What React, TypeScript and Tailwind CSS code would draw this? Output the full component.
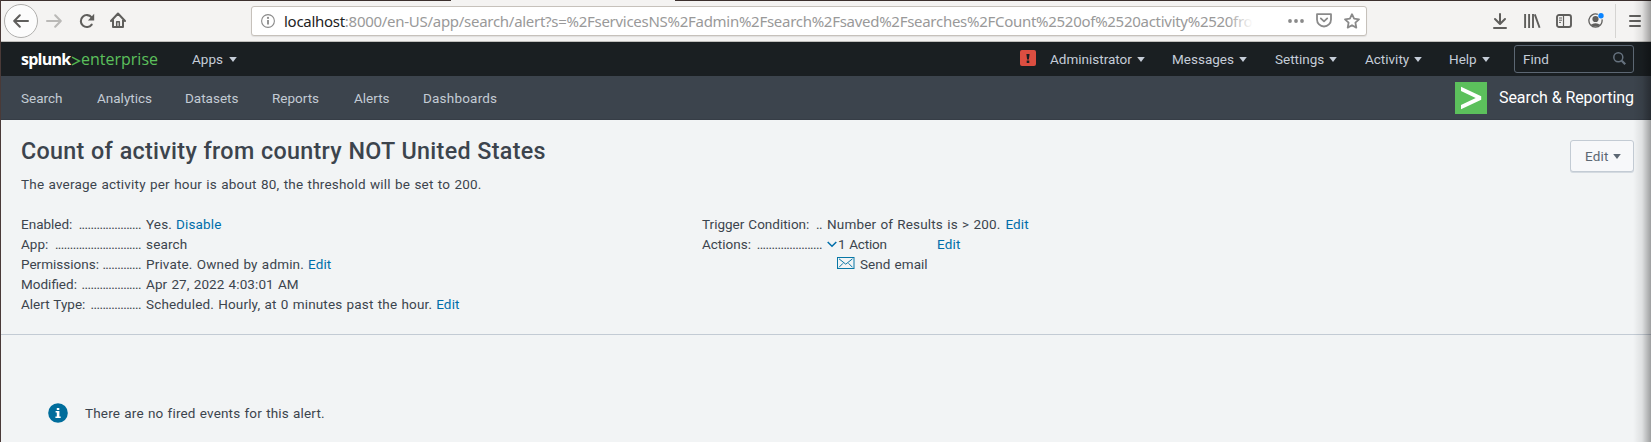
import React from "react";

function Caret({ className = "" }: { className?: string }) {
  return (
    <svg width="8" height="5" viewBox="0 0 8 5" className={`shrink-0 ${className}`} fill="currentColor">
      <path d="M0.2 0h7.6L4 4.9z" />
    </svg>
  );
}

function BrowserBar() {
  return (
    <div className="relative flex h-[42px] items-center border-b border-[#c0bfbc] bg-[#f4f3f2] text-[#5f5e5c]">
      <div className="ml-[3px] flex h-[34px] w-[34px] shrink-0 items-center justify-center rounded-full border border-[#b0afad] bg-[#fcfcfc]">
        <svg width="16" height="14" viewBox="0 0 16 14" fill="none" stroke="currentColor" strokeWidth="2" strokeLinecap="round" strokeLinejoin="round">
          <path d="M15 7H1.3M6.8 1.2L1.2 7l5.6 5.8" />
        </svg>
      </div>
      <svg width="16" height="14" viewBox="0 0 16 14" className="ml-[8px] shrink-0 text-[#bab9b7]" fill="none" stroke="currentColor" strokeWidth="2" strokeLinecap="round" strokeLinejoin="round">
        <path d="M1 7h13.7M9.2 1.2L14.8 7l-5.6 5.8" />
      </svg>
      <svg width="16" height="16" viewBox="0 0 16 16" className="ml-[17px] shrink-0" fill="none" stroke="currentColor" strokeWidth="2.1">
        <path d="M12.7 11.6A6 6 0 1 1 12.6 4.4" strokeLinecap="round" />
        <path d="M15.2 0.8v6.6H8.9z" fill="currentColor" stroke="none" />
      </svg>
      <svg width="16" height="17" viewBox="0 0 16 17" className="ml-[15px] shrink-0" fill="none" stroke="currentColor" strokeWidth="2" strokeLinecap="round" strokeLinejoin="round">
        <path d="M1 9L8 1.5 15 9M3 8v7h10V8" />
        <path d="M6.7 15V9.8h2.6V15" strokeWidth="1.5" />
      </svg>
      <div className="ml-[125px] flex h-[30px] w-[1116px] shrink-0 items-center rounded-[3px] border border-[#c6c1bb] bg-white text-[#8a8a8a] shadow-[0_1px_1px_rgba(0,0,0,0.08)]">
        <svg width="14" height="14" viewBox="0 0 14 14" className="ml-[9px] shrink-0" fill="none" stroke="currentColor" strokeWidth="1.1">
          <circle cx="7" cy="7" r="6.4" />
          <path d="M7 6v4.6" strokeWidth="1.8" />
          <circle cx="7" cy="3.9" r="1.1" fill="currentColor" stroke="none" />
        </svg>
        <div className="relative ml-[9px] w-[969px] overflow-hidden whitespace-nowrap font-['Noto_Sans',sans-serif] text-[15px] leading-[24px] tracking-[-0.28px] text-[#999]">
          <span className="text-[#222]">localhost</span>
          :8000/en-US/app/search/alert?s=%2FservicesNS%2Fadmin%2Fsearch%2Fsaved%2Fsearches%2FCount%2520of%2520activity%2520fro
          <div className="absolute inset-y-0 right-0 w-[26px] bg-linear-to-r from-transparent to-white" />
        </div>
        <svg width="16" height="4" viewBox="0 0 16 4" className="ml-[35px] shrink-0" fill="currentColor">
          <circle cx="2" cy="2" r="1.9" />
          <circle cx="8" cy="2" r="1.9" />
          <circle cx="14" cy="2" r="1.9" />
        </svg>
        <svg width="16" height="15" viewBox="0 0 16 15" className="ml-[12px] shrink-0" fill="none" stroke="currentColor" strokeWidth="1.8" strokeLinecap="round" strokeLinejoin="round">
          <path d="M1 1.2h14v5.3a7 7 0 0 1-14 0z" />
          <path d="M4.8 5.4L8 8.4l3.2-3" />
        </svg>
        <svg width="16" height="16" viewBox="0 0 16 16" className="ml-[12px] shrink-0" fill="none" stroke="currentColor" strokeWidth="1.8" strokeLinejoin="round">
          <path d="M8 1.2l2.1 4.5 4.9.6-3.6 3.4.9 4.9L8 12.2l-4.3 2.4.9-4.9L1 6.3l4.9-.6z" />
        </svg>
      </div>
      <svg width="14" height="16" viewBox="0 0 14 16" className="ml-[126px] shrink-0" fill="none" stroke="currentColor" strokeWidth="2" strokeLinecap="round" strokeLinejoin="round">
        <path d="M7 1v9.5M2 6l5 5 5-5M1 15h12" />
      </svg>
      <svg width="17" height="14" viewBox="0 0 17 14" className="ml-[17px] shrink-0" fill="none" stroke="currentColor" strokeWidth="1.9">
        <path d="M1.1 0v14M5.1 0v14M9 0v14M10.8 0.4l4.8 13.3" />
      </svg>
      <svg width="16" height="14" viewBox="0 0 16 14" className="ml-[15px] shrink-0" fill="none" stroke="currentColor" strokeWidth="1.9">
        <rect x="1" y="1" width="14" height="12" rx="2" />
        <path d="M7.5 1v12" strokeWidth="1.2" />
        <path d="M3 4h3M3 6.2h3M3 8.4h2" strokeWidth="1" />
      </svg>
      <svg width="17" height="16" viewBox="0 0 17 16" className="ml-[16px] shrink-0" fill="none" stroke="currentColor">
        <path d="M9.8 1.4A6.6 6.6 0 1 0 14 6.400" strokeWidth="1.3" />
        <circle cx="7.5" cy="6" r="3.1" fill="currentColor" stroke="none" />
        <path d="M2.8 11.4c1.6.2 2.2-1.1 4.7-1.1s3.1 1.3 4.7 1.1C11.2 12.7 9.5 13.5 7.5 13.5s-3.7-.8-4.7-2.1z" fill="currentColor" stroke="none" />
        <circle cx="13" cy="2.7" r="2.7" fill="#0a84ff" stroke="none" />
      </svg>
      <div className="ml-[10px] h-[34px] w-px shrink-0 bg-[#d5d4d2]" />
      <svg width="12" height="12" viewBox="0 0 12 12" className="ml-[13px] shrink-0" fill="none" stroke="currentColor" strokeWidth="2" strokeLinecap="round">
        <path d="M1 1h10M1 6h10M1 11h10" />
      </svg>
      <div className="absolute inset-x-0 top-0 flex h-px justify-between">
        <div className="w-[450px] bg-[#3c302e]" />
        <div className="w-[976px] bg-[#3c302e]" />
      </div>
    </div>
  );
}

const menus = [
  { label: "Administrator", cell: "w-[122px]" },
  { label: "Messages", cell: "w-[103px]" },
  { label: "Settings", cell: "w-[90px]" },
  { label: "Activity", cell: "w-[84px]" },
  { label: "Help", cell: "w-[65px]" },
];

function TopBar() {
  return (
    <div className="flex h-[34px] items-center bg-[#1a1f22] pl-[20px] text-[#c5cdd8]">
      <div className="flex w-[171px] items-center font-['Open_Sans',sans-serif] text-[16px] leading-[20px]">
        <span className="w-[50px] font-bold tracking-[-0.74px] text-white">splunk</span>
        <svg width="10" height="10" viewBox="0 0 10 10" className="mt-[3px] shrink-0" fill="none" stroke="#53b84f" strokeWidth="1.4">
          <path d="M1 1.2L8.6 5 1 8.8" />
        </svg>
        <span className="text-[#5cc05c]">enterprise</span>
      </div>
      <span>Apps</span>
      <Caret className="ml-[6px]" />
      <div className="ml-auto flex items-center">
        <div className="mb-[2px] mr-[14px] flex h-[16px] w-[16px] items-center justify-center rounded-[2px] bg-[#dc4e41]">
          <svg width="4" height="9" viewBox="0 0 4 9" fill="#1a1f22">
            <path d="M0.4 0h3.2L2.9 5.5H1.1zM0.7 6.6h2.6V9H0.7z" />
          </svg>
        </div>
        {menus.map((m) => (
          <div key={m.label} className={`flex shrink-0 items-center ${m.cell}`}>
            <span>{m.label}</span>
            <Caret className="ml-[5px]" />
          </div>
        ))}
        <div className="mr-[17px] flex h-[28px] w-[120px] items-center justify-between rounded-[3px] border border-[#5c6773] pl-[8px] pr-[7px]">
          <span>Find</span>
          <svg width="13" height="13" viewBox="0 0 13 13" className="mb-[1px] text-[#66727f]" fill="none" stroke="currentColor" strokeWidth="1.5">
            <circle cx="5.3" cy="5.3" r="4.5" />
            <path d="M8.7 8.7l3.5 3.5" strokeWidth="2.2" />
          </svg>
        </div>
      </div>
    </div>
  );
}

const tabs = [
  { label: "Search", cell: "w-[76px]" },
  { label: "Analytics", cell: "w-[88px]" },
  { label: "Datasets", cell: "w-[87px]" },
  { label: "Reports", cell: "w-[82px]" },
  { label: "Alerts", cell: "w-[69px]" },
  { label: "Dashboards", cell: "w-[80px] tracking-[0.2px]" },
];

function AppNav() {
  return (
    <div className="flex h-[44px] items-center border-b border-[#363d46] bg-[#3c444d] pl-[20px] pr-[17px] text-[#c3cbd4]">
      {tabs.map((t) => (
        <span key={t.label} className={`shrink-0 pt-px ${t.cell}`}>
          {t.label}
        </span>
      ))}
      <svg width="32" height="32" viewBox="0 0 32 32" className="ml-auto">
        <rect width="32" height="32" fill="#5cc05c" />
        <path d="M6 4.8L26.2 14.300v3.5L6 27.3v-4.2L20.7 16 6 9z" fill="#fff" />
      </svg>
      <span className="ml-[12px] w-[135px] text-[16px] tracking-[-0.07px] text-white">Search &amp; Reporting</span>
    </div>
  );
}

function Row({ label, dots, children }: { label: string; dots: string; children: React.ReactNode }) {
  return (
    <div className="flex h-[20px] items-center">
      <div className="flex w-[125px] shrink-0 items-center justify-between pr-[5px] tracking-normal">
        <span>{label}</span>
        <span className="tracking-[-0.59px]">{dots}</span>
      </div>
      {children}
    </div>
  );
}

function Link({ children, className = "" }: { children: React.ReactNode; className?: string }) {
  return <a className={`text-[#006eaa] ${className}`}>{children}</a>;
}

export default function App() {
  return (
    <div className="relative flex h-[442px] w-[1651px] flex-col overflow-hidden whitespace-nowrap border-l border-[#4a3a38] bg-[#f2f4f5] font-[Roboto,sans-serif] text-[13.5px] leading-[20px] text-[#3c444d]">
      <BrowserBar />
      <TopBar />
      <AppNav />
      <div className="flex h-[215px] shrink-0 flex-col border-b border-[#c3cbd4] pl-[20px] pr-[17px] tracking-[0.16px] [word-spacing:0.7px]">
        <div className="flex items-start justify-between pt-[17px]">
          <h1 className="text-[23.3px] font-medium leading-[28px] tracking-[0.3px] [word-spacing:0.4px]">
            Count of activity from country NOT United States
          </h1>
          <button className="-mb-[16px] mt-[3px] flex h-[32px] w-[64px] items-center rounded-[3px] border border-[#c3cbd4] bg-[#f7f8fa] pl-[14px] text-[#5c6773] shadow-[0_1px_0_#d4dae0]">
            Edit
            <Caret className="ml-[4px]" />
          </button>
        </div>
        <p className="mt-[9px] tracking-[0.2px]">The average activity per hour is about 80, the threshold will be set to 200.</p>
        <div className="mt-[20px] flex">
          <div className="w-[681px]">
            <Row label="Enabled:" dots=".....................">
              <span>Yes.</span>
              <Link className="ml-[4px]">Disable</Link>
            </Row>
            <Row label="App:" dots=".............................">
              <span>search</span>
            </Row>
            <Row label="Permissions:" dots=".............">
              <span>Private. Owned by admin.</span>
              <Link className="ml-[4px]">Edit</Link>
            </Row>
            <Row label="Modified:" dots="....................">
              <span className="tracking-[0.1px]">Apr 27, 2022 4:03:01 AM</span>
            </Row>
            <Row label="Alert Type:" dots=".................">
              <span>Scheduled. Hourly, at 0 minutes past the hour.</span>
              <Link className="ml-[4px]">Edit</Link>
            </Row>
          </div>
          <div>
            <Row label="Trigger Condition:" dots="..">
              <span>Number of Results is &gt; 200.</span>
              <Link className="ml-[5px]">Edit</Link>
            </Row>
            <Row label="Actions:" dots="......................">
              <svg width="10" height="7" viewBox="0 0 10 7" className="mr-[1px] shrink-0" fill="none" stroke="#006eaa" strokeWidth="1.5">
                <path d="M0.7 1L5 5.3 9.3 1" />
              </svg>
              <span className="w-[99px] tracking-[-0.2px]">1 Action</span>
              <Link>Edit</Link>
            </Row>
            <div className="flex h-[20px] items-center pl-[135px]">
              <svg width="18" height="12" viewBox="0 0 18 12" className="mb-[2px] mr-[5px] shrink-0" fill="none" stroke="#0877a6" strokeWidth="1">
                <rect x="0.5" y="0.5" width="16.5" height="11" />
                <path d="M2 1.8l6.750 5.400L15.5 1.8M2 10.3l4-4M15.5 10.3l-4-4" />
              </svg>
              <span className="tracking-[0.05px]">Send email</span>
            </div>
          </div>
        </div>
      </div>
      <div className="flex items-center pl-[47px] pt-[68px] tracking-[0.16px] [word-spacing:0.7px]">
        <svg width="20" height="20" viewBox="0 0 20 20" className="shrink-0">
          <circle cx="10" cy="10" r="9.8" fill="#006d9c" />
          <path d="M7.6 8h3.800v5.5h1.3V15H7.4v-1.5h1.4V9.5H7.6zM8.8 5h2.5v2H8.8z" fill="#fff" />
        </svg>
        <span className="ml-[17px]">There are no fired events for this alert.</span>
      </div>
      <div className="pointer-events-none absolute inset-y-0 right-0 w-[18px] bg-linear-to-r from-transparent via-black/8 to-black/35" />
    </div>
  );
}
